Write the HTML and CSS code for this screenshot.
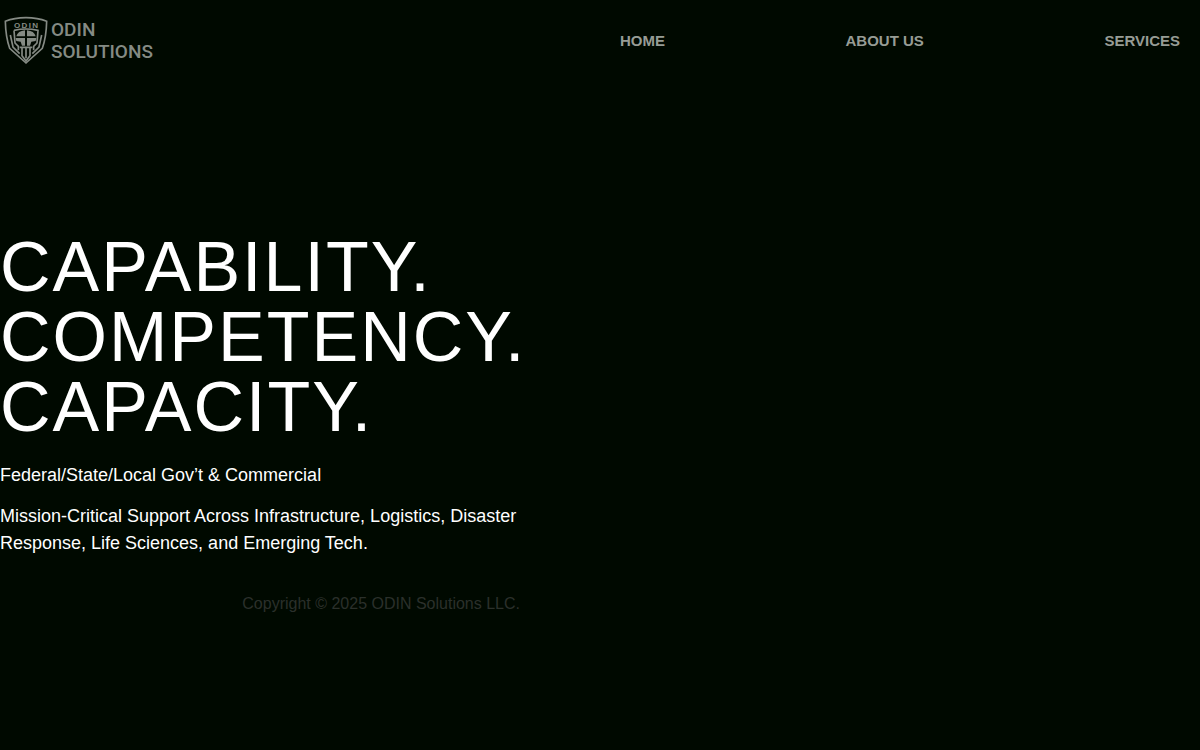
FILE: index.html
```html
<!DOCTYPE html>
<html lang="en">
<head>
  <meta charset="UTF-8">
  <meta name="viewport" content="width=device-width, initial-scale=1.0">
  <title>ODIN Solutions</title>
  <link rel="stylesheet" href="styles.css">
</head>
<body>

  <header class="header">
    <a href="#" class="logo">
      <svg class="logo-shield" viewBox="0 0 138 150" aria-hidden="true">
        <!-- shield -->
        <path d="M69 8Q34 8 7 19Q8 66 20 100L69 144L118 100Q130 66 131 19Q104 8 69 8Z" fill="none" stroke="currentColor" stroke-width="5"/>
        <text x="71" y="38" class="shield-text">ODIN</text>
        <!-- helmet -->
        <path d="M33 46Q69 38 105 46L102 84L92 94V106M33 46L36 84L46 94V106" fill="none" stroke="currentColor" stroke-width="5"/>
        <path d="M40 64Q44 48 66 46V64H40ZM72 46Q94 48 98 64H72ZM38 69H66V92H57L53 80L40 78ZM72 69H100L98 78L85 80L81 92H72Z" fill="currentColor"/>
        <!-- beard -->
        <path d="M22 60L30 96L50 116M116 60L108 96L88 116M57 96V122L69 138L81 122V96M69 98V130M50 97H88" fill="none" stroke="currentColor" stroke-width="5"/>
      </svg>
      <span class="logo-text">ODIN<br>SOLUTIONS</span>
    </a>
    <nav class="nav">
      <a href="#">HOME</a>
      <a href="#">ABOUT US</a>
      <a href="#">SERVICES</a>
    </nav>
  </header>

  <main class="hero">
    <h1>CAPABILITY.<br>COMPETENCY.<br>CAPACITY.</h1>
    <p>Federal/State/Local Gov’t &amp; Commercial</p>
    <p>Mission-Critical Support Across Infrastructure, Logistics, Disaster Response, Life Sciences, and Emerging Tech.</p>
    <footer class="footer">Copyright © 2025 ODIN Solutions LLC.</footer>
  </main>

</body>
</html>
```
FILE: styles.css
```css
* {
  box-sizing: border-box;
}

body {
  font-family: "Liberation Sans", Arial, sans-serif;
  background: #000900;
  color: #ffffff;
  margin: 0;
}

a {
  color: #979c95;
  text-decoration: none;
}

.header {
  display: flex;
  align-items: center;
  justify-content: space-between;
  height: 80px;
}

.logo {
  display: flex;
  align-items: center;
  gap: 2px;
  padding-left: 3px;
  color: #858b84;
}

.logo-shield {
  width: 46px;
  height: 50px;
}

.shield-text {
  font-family: "Liberation Sans", Arial, sans-serif;
  font-size: 24px;
  font-weight: bold;
  letter-spacing: 4px;
  text-anchor: middle;
  fill: currentColor;
}

.logo-text {
  padding-top: 2px;
  font-family: Roboto, sans-serif;
  font-size: 19px;
  font-weight: 500;
  line-height: 22px;
}

.nav {
  display: flex;
  justify-content: space-between;
  width: 50%;
  padding: 0 20px;
  font-size: 15px;
  font-weight: bold;
}

.hero {
  max-width: 540px;
  padding-top: 152px;
}

h1 {
  margin: 0 0 20px;
  font-size: 70px;
  font-weight: normal;
  line-height: 1;
  letter-spacing: 2px;
}

p {
  margin: 0 0 14px;
  font-size: 18px;
  line-height: 27px;
}

.footer {
  padding: 24px 20px 0 0;
  color: #2b302b;
  font-size: 16px;
  text-align: right;
}
```
